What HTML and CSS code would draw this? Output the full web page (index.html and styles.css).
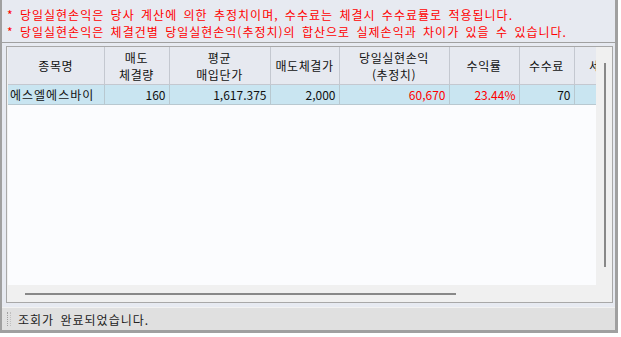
FILE: index.html
```html
<!DOCTYPE html>
<html lang="ko">
<head>
    <meta charset="UTF-8">
    <title>당일실현손익</title>
    <link rel="stylesheet" href="styles.css">
</head>
<body>
    <div class="window">
        <div class="notice">
            <p>* 당일실현손익은 당사 계산에 의한 추정치이며, 수수료는 체결시 수수료률로 적용됩니다.</p>
            <p>* 당일실현손익은 체결건별 당일실현손익(추정치)의 합산으로 실제손익과 차이가 있을 수 있습니다.</p>
        </div>

        <div class="panel">
            <div class="grid">
                <div class="grid-main">
                    <div class="grid-view">
                        <table>
                            <colgroup>
                                <col class="c-name">
                                <col class="c-qty">
                                <col class="c-avg">
                                <col class="c-sell">
                                <col class="c-pnl">
                                <col class="c-rate">
                                <col class="c-fee">
                                <col class="c-tax">
                            </colgroup>
                            <thead>
                                <tr>
                                    <th>종목명</th>
                                    <th>매도<br>체결량</th>
                                    <th>평균<br>매입단가</th>
                                    <th>매도체결가</th>
                                    <th>당일실현손익<br>(추정치)</th>
                                    <th>수익률</th>
                                    <th>수수료</th>
                                    <th>세금</th>
                                </tr>
                            </thead>
                            <tbody>
                                <tr class="selected">
                                    <td class="left">에스엘에스바이</td>
                                    <td>160</td>
                                    <td>1,617.375</td>
                                    <td>2,000</td>
                                    <td class="up">60,670</td>
                                    <td class="up">23.44%</td>
                                    <td>70</td>
                                    <td></td>
                                </tr>
                            </tbody>
                        </table>
                    </div>
                    <div class="vscroll"><span class="thumb"></span></div>
                </div>
                <div class="hscroll"><span class="thumb"></span></div>
            </div>
        </div>

        <div class="status">
            <span class="grip"></span>
            <span class="status-text">조회가 완료되었습니다.</span>
        </div>
    </div>
</body>
</html>
```

FILE: styles.css
```css
body {
    margin: 0;
    width: 621px;
    height: 337px;
    overflow: hidden;
    background-color: #ffffff;
    font-family: "Noto Sans CJK KR", "DejaVu Sans", sans-serif;
    font-size: 12px;
}

.window {
    width: 613px;
    height: 330px;
    background-color: #e7eaf1;
    border-left: 2px solid #a0a0a0;
    border-right: 3px solid #a0a0a0;
    border-bottom: 3px solid #a0a0a0;
    display: flex;
    flex-direction: column;
}

.notice {
    height: 36px;
    padding: 6px 0 0 5px;
    color: #ff0000;
    letter-spacing: 1px;
    word-spacing: 2px;
}

.notice p {
    margin: 0;
    height: 17px;
    line-height: 17px;
    white-space: nowrap;
}

.panel {
    border-top: 1px solid #a0a0a0;
    padding: 3px 2px 0 4px;
}

.grid {
    border: 1px solid #a8a8a8;
    background-color: #f0f0f0;
    padding-left: 1px;
}

.grid-main {
    display: flex;
    height: 238px;
}

.grid-view {
    width: 588px;
    height: 238px;
    overflow: hidden;
    background-color: #fbfcfe;
}

table {
    border-collapse: collapse;
    table-layout: fixed;
    width: 620px;
}

.c-name { width: 96px; }
.c-qty { width: 65px; }
.c-avg { width: 101px; }
.c-sell { width: 69px; }
.c-pnl { width: 110px; }
.c-rate { width: 70px; }
.c-fee { width: 55px; }
.c-tax { width: 54px; }

th {
    height: 37px;
    padding: 0;
    font-weight: normal;
    color: #111;
    line-height: 17px;
    letter-spacing: 0.6px;
    background-color: #e6e9f0;
    border-right: 1px solid #c4c8d0;
    border-bottom: 1px solid #c4c8d0;
    white-space: nowrap;
    overflow: hidden;
}

td {
    height: 19px;
    padding: 0 3px 0 0;
    text-align: right;
    color: #111;
    border-right: 1px solid #b8c8d0;
    border-bottom: 1px solid #b8c8d0;
    white-space: nowrap;
    overflow: hidden;
}

td.left {
    text-align: left;
    padding: 0 0 0 2px;
    letter-spacing: 1px;
}

td.up {
    color: #ff0000;
}

.selected td {
    background-color: #c9e5f1;
}

.vscroll {
    width: 16px;
    display: flex;
    justify-content: center;
    padding-top: 16px;
}

.vscroll .thumb {
    width: 2px;
    height: 204px;
    margin-left: 1px;
    background-color: #888888;
}

.hscroll {
    height: 17px;
    display: flex;
    align-items: center;
}

.hscroll .thumb {
    width: 431px;
    height: 2px;
    margin-left: 17px;
    background-color: #888888;
}

.status {
    margin-top: 4px;
    height: 22px;
    border-top: 1px solid #f2f2f2;
    background-color: #e0e0e0;
    display: flex;
    align-items: center;
    color: #222;
    letter-spacing: 1px;
    word-spacing: 2px;
}

.grip {
    width: 2px;
    height: 14px;
    margin: 0 7px 0 5px;
    border-left: 1px dotted #a0a0a0;
    border-right: 1px dotted #c0c0c0;
}
```
